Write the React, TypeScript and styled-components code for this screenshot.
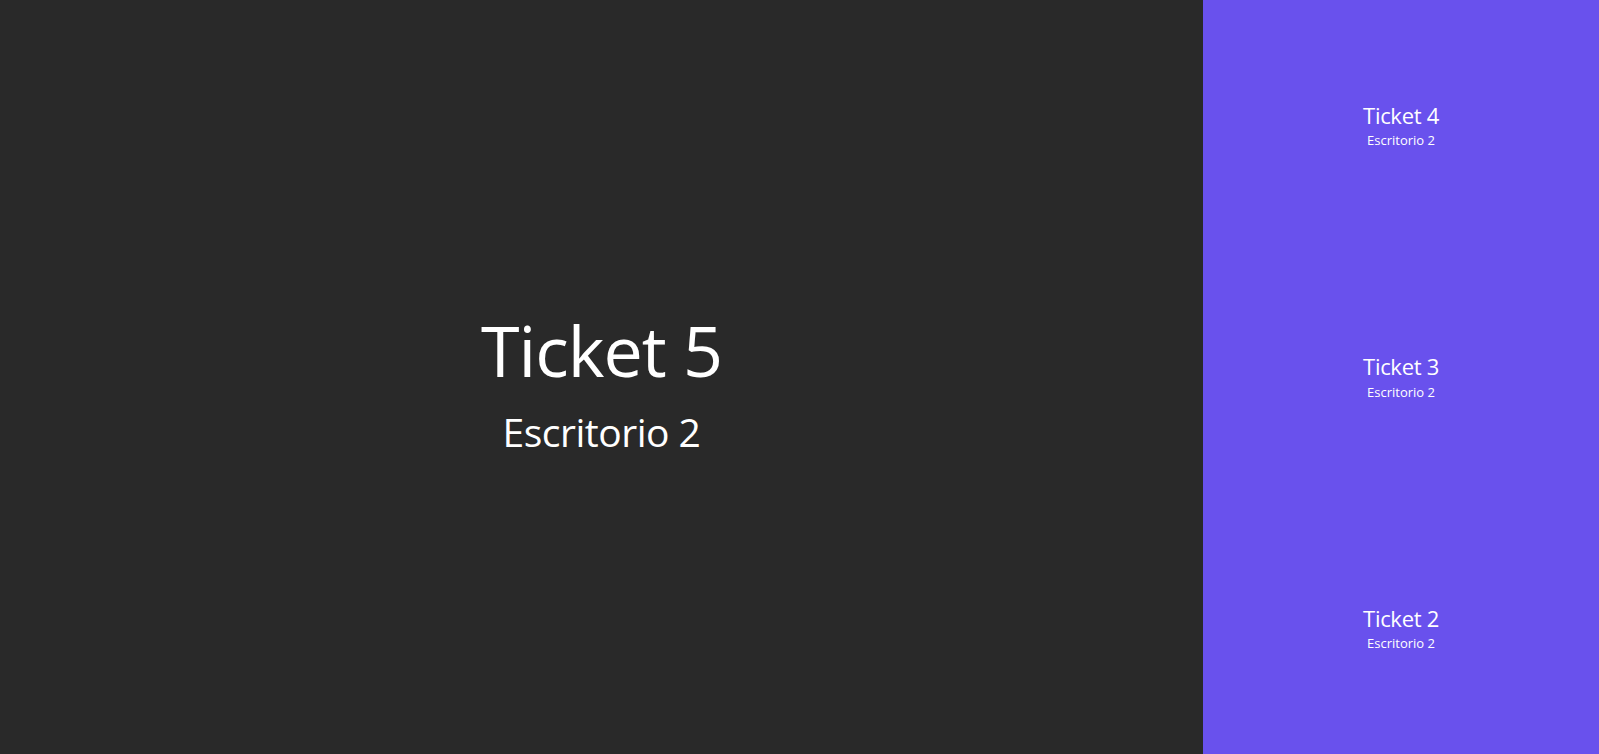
import React from "react";
import styled, { createGlobalStyle } from "styled-components";

const Global = createGlobalStyle`
  html, body { margin: 0; padding: 0; height: 100%; }
  body { font-family: "Open Sans", "Noto Sans", sans-serif; }
  #root { height: 100%; }
`;

const Layout = styled.div`
  display: flex;
  width: 100vw;
  height: 100vh;
  overflow: hidden;
`;

const Main = styled.main`
  width: 1203px;
  flex: none;
  box-sizing: border-box;
  padding-top: 9px;
  background: #292929;
  color: #ffffff;
  display: flex;
  flex-direction: column;
  align-items: center;
  justify-content: center;
`;

const BigTitle = styled.h1`
  margin: 0;
  font-size: 70px;
  font-weight: 400;
  line-height: 1.2;
  letter-spacing: -1px;
`;

const BigSub = styled.h2`
  margin: 17px 0 0;
  font-size: 39px;
  font-weight: 400;
  line-height: 1.2;
  letter-spacing: -0.5px;
`;

const Side = styled.aside`
  flex: 1;
  background: #6951ed;
  color: #ffffff;
  display: flex;
  flex-direction: column;
`;

const Item = styled.div`
  flex: 1;
  display: flex;
  flex-direction: column;
  align-items: center;
  justify-content: center;
`;

const ItemTitle = styled.div`
  font-size: 22px;
  line-height: 1.25;
  letter-spacing: -0.3px;
`;

const ItemSub = styled.div`
  margin-top: 3px;
  font-size: 13px;
  line-height: 1.3;
`;

const queue = [
  { ticket: 4, desk: 2 },
  { ticket: 3, desk: 2 },
  { ticket: 2, desk: 2 },
];

export default function App() {
  return (
    <>
      <Global />
      <Layout>
        <Main>
          <BigTitle>Ticket 5</BigTitle>
          <BigSub>Escritorio 2</BigSub>
        </Main>
        <Side>
          {queue.map((q) => (
            <Item key={q.ticket}>
              <ItemTitle>Ticket {q.ticket}</ItemTitle>
              <ItemSub>Escritorio {q.desk}</ItemSub>
            </Item>
          ))}
        </Side>
      </Layout>
    </>
  );
}
